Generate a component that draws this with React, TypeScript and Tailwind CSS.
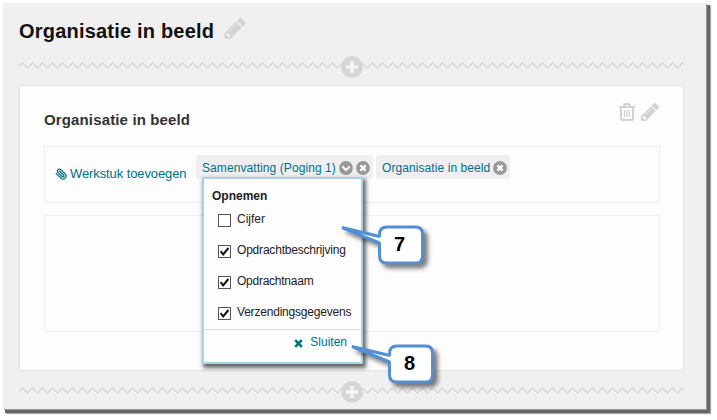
import { LuPaperclip } from "react-icons/lu";

const options = [
  { label: "Cijfer", checked: false, spacing: "" },
  { label: "Opdrachtbeschrijving", checked: true, spacing: "tracking-[-0.2px]" },
  { label: "Opdrachtnaam", checked: true, spacing: "tracking-[-0.25px]" },
  { label: "Verzendingsgegevens", checked: true, spacing: "tracking-[-0.2px]" },
];

function PencilIcon({ className }: { className: string }) {
  return (
    <svg className={className} viewBox="0 149 1515 1515" fill="#d3d3d3">
      <path d="M363 1536l91-91-235-235-91 91v107h128v128h107zM886 608q0-22-22-22-10 0-17 7l-542 542q-7 7-7 17 0 22 22 22 10 0 17-7l542-542q7-7 7-17zM832 416l416 416-832 832H0v-416zM1515 512q0 53-37 90l-166 166-416-416 166-165q36-38 90-38 53 0 91 38l235 234q37 39 37 91z" />
    </svg>
  );
}

function Divider() {
  return (
    <div className="relative h-[22px] w-[665px]">
      <svg className="block h-[22px] w-full" aria-hidden="true">
        <defs>
          <pattern id="zigzag" width="10" height="22" patternUnits="userSpaceOnUse">
            <path d="M-2 12L3.500 7L8.500 12L13.500 7" fill="none" stroke="#c2c2c2" />
          </pattern>
        </defs>
        <rect width="665" height="22" fill="url(#zigzag)" />
      </svg>
      <svg className="absolute left-[322px] top-0" width="22" height="22" viewBox="0 0 22 22">
        <circle cx="11" cy="11" r="10.8" fill="#d5d5d5" />
        <path d="M11 5v12M5 11h12" stroke="#f4f4f4" strokeWidth="3.6" />
      </svg>
    </div>
  );
}

function RoundIcon({ type }: { type: "down" | "close" }) {
  return (
    <svg className="shrink-0" width="14" height="14" viewBox="0 0 14 14">
      <circle cx="7" cy="7" r="6.9" fill="#999" />
      {type === "down" ? (
        <path d="M3.4 5.5L7 9.1l3.6-3.6" fill="none" stroke="#fff" strokeWidth="2" />
      ) : (
        <path d="M4.4 4.4l5.2 5.2M9.6 4.4L4.4 9.6" stroke="#fff" strokeWidth="2.2" />
      )}
    </svg>
  );
}

function TrashIcon() {
  return (
    <svg width="16" height="18" viewBox="0 0 16 18" fill="none" stroke="#d2d2d2">
      <path d="M0 4h16" strokeWidth="2" />
      <path d="M5 3.5V2q0-1 1-1h4q1 0 1 1v1.5" strokeWidth="1.8" />
      <path d="M2 4v11.5q0 1.500 1.500 1.500h9q1.500 0 1.500-1.500V4" strokeWidth="2" />
      <path d="M5.500 7v7M8 7v7M10.500 7v7" strokeWidth="1.200" />
    </svg>
  );
}

function Checkbox({ checked }: { checked: boolean }) {
  return (
    <svg className="shrink-0" width="13" height="13" viewBox="0 0 13 13">
      <rect x=".5" y=".5" width="12" height="12" fill="#fff" stroke="#555" />
      {checked && <path d="M2.600 6.200L5.200 9.400L10.400 3" fill="none" stroke="#111" strokeWidth="2" />}
    </svg>
  );
}

function Callout({ n, className }: { n: number; className: string }) {
  return (
    <div className={`absolute h-[50px] w-[95px] ${className}`}>
      <svg className="block overflow-visible drop-shadow-[4px_4px_2px_rgba(0,0,0,0.5)]" width="95" height="50">
        <path
          d="M2 2.500L39.500 11.500V9.500Q39.500 2 47 2H75.500Q82.500 2 82.500 9V31Q82.500 38 75.500 38H47Q39.500 38 39.500 31V18Z"
          fill="#fff"
          stroke="#548fd4"
          strokeWidth="3"
          strokeLinejoin="bevel"
        />
      </svg>
      <span className="absolute left-[39px] top-[7px] w-[41px] text-center text-[20px] leading-6 font-bold text-black">{n}</span>
    </div>
  );
}

export default function App() {
  return (
    <div className="h-[420px] w-[717px] overflow-hidden bg-white pl-[3px] pt-[3px] font-['Liberation_Sans',Arial,sans-serif]">
      <main className="relative h-[406px] w-[703px] bg-[#f0f0f0] pl-4 shadow-[1px_1px_0_#999,3px_3px_0_1px_#666,4px_4px_1px_1px_#aaa]">
        <header className="flex h-[53px] items-center gap-[9px]">
          <h1 className="mt-[2px] w-[196px] whitespace-nowrap text-[20px] tracking-[0.2px] font-bold text-[#111]">Organisatie in beeld</h1>
          <PencilIcon className="mb-[2px] h-[21px] w-[22px]" />
        </header>
        <Divider />

        <section className="mt-[7px] h-[286px] w-[665px] rounded-[3px] border border-[#e4e4e4] bg-[#fdfdfd] px-6">
          <div className="flex h-[60px] items-start justify-between pt-[17px]">
            <h2 className="mt-[7px] text-[15px] leading-5 tracking-[0.14px] font-bold text-[#333]">Organisatie in beeld</h2>
            <div className="flex gap-[6px]">
              <TrashIcon />
              <PencilIcon className="h-[18px] w-[18px]" />
            </div>
          </div>

          <div className="flex h-[57px] w-[616px] border border-[#eee] text-[#007087]">
            <div className="flex h-[54px] w-[151px] items-center pl-[10px] text-[13px] tracking-[-0.1px]">
              <LuPaperclip className="mr-[3px] h-3 w-3 -scale-x-100 stroke-[2.5]" />
              <span className="whitespace-nowrap">Werkstuk toevoegen</span>
            </div>
            <div className="mt-[8px] flex items-start gap-[3px] text-[12px] tracking-[0.08px]">
              <div className="flex h-6 w-[177px] items-center gap-[3px] rounded-[3px] bg-[#efefef] pl-[6px] pt-[2px]">
                <span className="whitespace-nowrap">Samenvatting (Poging 1)</span>
                <RoundIcon type="down" />
                <RoundIcon type="close" />
              </div>
              <div className="flex h-6 w-[134px] items-center gap-[3px] rounded-[3px] bg-[#efefef] pl-[6px] pt-[2px]">
                <span className="whitespace-nowrap">Organisatie in beeld</span>
                <RoundIcon type="close" />
              </div>
            </div>
          </div>
          <div className="mt-[12px] h-[117px] w-[616px] border border-[#eee]" />
        </section>

        <div className="mt-[10px]">
          <Divider />
        </div>

        {/* Opened menu of the first attachment */}
        <div className="absolute left-[199px] top-[174px] h-[187px] w-[161px] border-2 border-[#a7d4e1] bg-[#fdfdfd] text-[12px] text-[#222] shadow-[2px_3px_4px_1px_rgba(0,0,0,0.6)]">
          <h3 className="h-[32px] pl-2 pt-[9px] leading-4 font-bold">Opnemen</h3>
          <div className="h-[118px] pl-[14px]">
            {options.map((option) => (
              <div key={option.label} className="flex h-[31px] gap-[6px] pt-[3px]">
                <Checkbox checked={option.checked} />
                <span className={`-mt-[2px] whitespace-nowrap leading-[14px] ${option.spacing}`}>{option.label}</span>
              </div>
            ))}
          </div>
          <div className="flex justify-end border-t border-[#ddd] pr-[14px] pt-1 text-[#007087]">
            <svg className="mr-[7px] mt-[5px]" width="9" height="9" viewBox="0 0 9 9">
              <path d="M1.200 1.200l6.600 6.600M7.800 1.200L1.200 7.800" stroke="#007087" strokeWidth="2.600" />
            </svg>
            <span className="leading-4">Sluiten</span>
          </div>
        </div>

        <Callout n={7} className="left-[337px] top-[222px]" />
        <Callout n={8} className="left-[347px] top-[341px]" />
      </main>
    </div>
  );
}
